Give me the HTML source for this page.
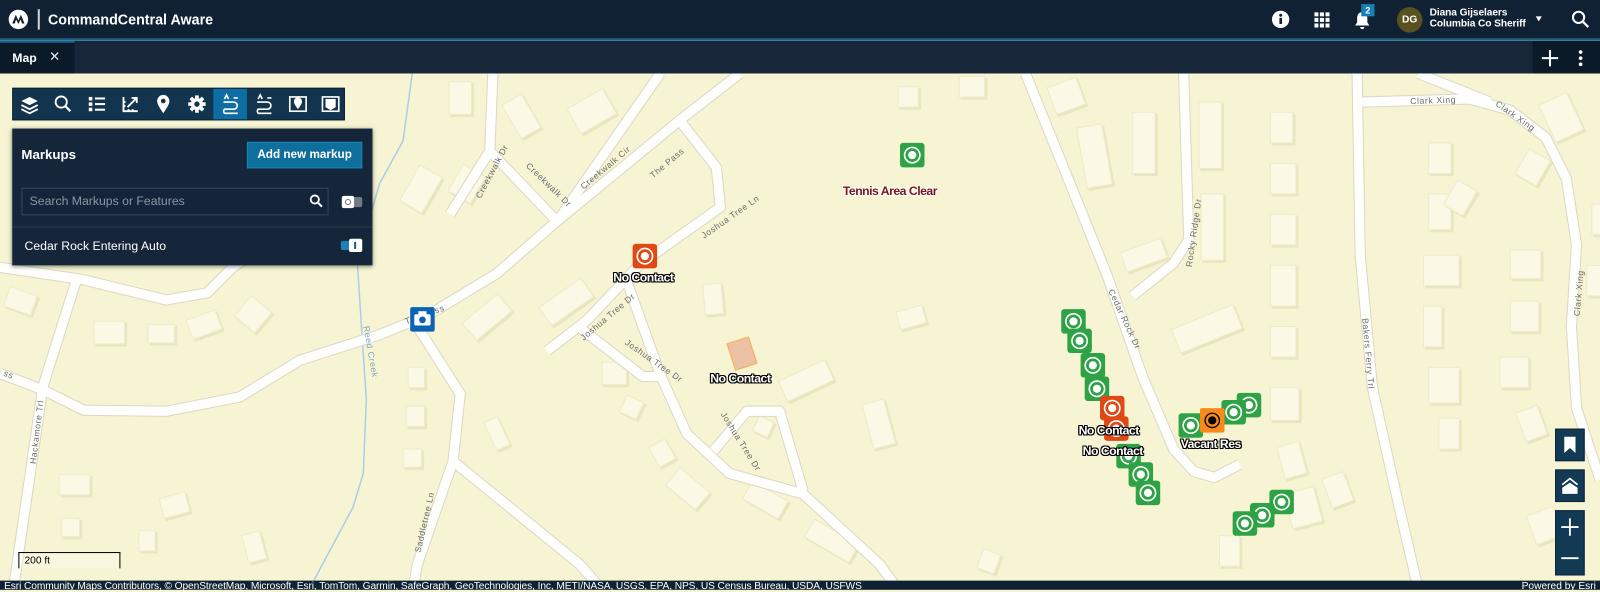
<!DOCTYPE html>
<html><head><meta charset="utf-8"><style>
*{margin:0;padding:0;box-sizing:border-box}
body{width:1600px;height:590px;overflow:hidden;background:#f7f4d3;font-family:"Liberation Sans",sans-serif}
#w{position:absolute;left:0;top:0;width:1568px;height:578px;transform:scale(1.020408);transform-origin:0 0}
.hdr{position:absolute;left:0;top:0;width:1568px;height:38px;background:#0f2133}
.bl{position:absolute;left:0;top:38px;width:1568px;height:2px;background:#17628a}
.tabs{position:absolute;left:0;top:40px;width:1568px;height:32px;background:#18263a}
.abs{position:absolute}
.wt{color:#fff}
.tb{position:absolute;left:12px;top:86px;width:326px;height:32px;background:#12344f;border:1px solid #0a1e2e}
.tb div{position:absolute;top:0;width:33px;height:30px}
.panel{position:absolute;left:12px;top:126px;width:353px;height:134px;background:#15263a;box-shadow:0 1px 4px rgba(0,0,0,.5)}
.lab{position:absolute;font-weight:bold;font-size:12px;color:#fff;letter-spacing:-0.5px;text-shadow:-1px -1px 0 #000,1px -1px 0 #000,-1px 1px 0 #000,1px 1px 0 #000,0 1px 0 #000,0 -1px 0 #000,1px 0 0 #000,-1px 0 0 #000;white-space:nowrap}
.ctl{position:absolute;left:1524px;width:29px;background:#123a55;border:1px solid #0a2436}
</style></head><body><div id="w">
<svg class="abs" style="left:0;top:0" width="1568" height="578" viewBox="0 0 1568 578">
<defs>
<g id="roads" fill="none" stroke-linejoin="round" stroke-linecap="butt">
<path d="M0,366 L42,382 82,402 163,403 235,389 294,353 372,328 421,308 487,268 542,220 666,118 725,72"/>
<path d="M0,262 L81,274 163,294 203,287 228,262 260,240"/>
<path d="M75,274 L42,379 13,578"/>
<path d="M546,217 L647,72"/>
<path d="M483,72 L480,148 441,210"/>
<path d="M480,148 L546,217"/>
<path d="M666,118 L702,164 706,203 627,259 575,314 536,344"/>
<path d="M568,321 L630,369 647,369"/>
<path d="M614,275 L647,367 673,425 715,464 787,484 862,553 880,578"/>
<path d="M699,442 L732,403 764,403 787,481"/>
<path d="M409,320 L451,386 444,452 409,553 405,578"/>
<path d="M444,452 L568,553 590,578"/>
<path d="M1005,72 L1085,270 1120,370 1150,440 1170,462 1190,468 1215,455"/>
<path d="M1160,72 L1165,235 1150,258 1110,290"/>
<path d="M1330,72 L1333,250 1345,380 1365,470 1390,578"/>
<path d="M1335,100 L1440,97 1480,108 1515,135 1535,175 1545,240 1540,320 1545,400 1568,470"/>
<path d="M1390,72 L1460,100"/>
</g>
<g id="mk"><rect x="-12" y="-12" width="24" height="24" rx="3"/><circle r="7.5" fill="none" stroke="#fff" stroke-width="1.6"/><circle r="4" fill="#fff"/></g>
</defs>
<rect width="1568" height="578" fill="#f7f4d3"/>
<path d="M404,72 L395,138 372,180 350,255 359,392 356,464 346,497 307,570" fill="none" stroke="#a9cfe8" stroke-width="1.5"/>
<g fill="#fbf9e5" stroke="#efebc8" stroke-width="1" style="filter:drop-shadow(2px 2px 0 #e9e5bf)">
<rect x="6" y="285" width="28" height="20" transform="rotate(20 20 295)"/>
<rect x="92" y="315" width="30" height="22"/><rect x="145" y="318" width="26" height="18"/>
<rect x="185" y="308" width="30" height="20" transform="rotate(-20 200 318)"/>
<rect x="235" y="295" width="26" height="26" transform="rotate(40 248 308)"/>
<rect x="58" y="465" width="30" height="20"/><rect x="158" y="485" width="26" height="20" transform="rotate(-15 171 495)"/>
<rect x="60" y="508" width="18" height="18"/><rect x="136" y="520" width="16" height="20"/>
<rect x="240" y="522" width="18" height="28" transform="rotate(-15 249 536)"/>
<rect x="400" y="360" width="16" height="20"/><rect x="398" y="398" width="18" height="20"/>
<rect x="395" y="440" width="18" height="18"/><rect x="480" y="410" width="14" height="30" transform="rotate(-25 487 425)"/>
<rect x="455" y="300" width="45" height="22" transform="rotate(-40 477 311)"/>
<rect x="445" y="165" width="25" height="30" transform="rotate(30 457 180)"/>
<rect x="400" y="165" width="25" height="40" transform="rotate(30 412 185)"/>
<rect x="440" y="80" width="22" height="32"/><rect x="500" y="95" width="22" height="38" transform="rotate(-30 511 114)"/>
<rect x="560" y="95" width="40" height="28" transform="rotate(-30 580 109)"/>
<rect x="530" y="285" width="50" height="22" transform="rotate(-35 555 296)"/>
<rect x="590" y="355" width="24" height="22"/><rect x="610" y="390" width="18" height="18" transform="rotate(25 619 399)"/>
<rect x="690" y="278" width="18" height="30" transform="rotate(-5 699 293)"/>
<rect x="765" y="362" width="50" height="22" transform="rotate(-25 790 373)"/>
<rect x="850" y="393" width="22" height="45" transform="rotate(-15 861 415)"/>
<rect x="740" y="410" width="16" height="16" transform="rotate(25 748 418)"/>
<rect x="640" y="433" width="18" height="22" transform="rotate(-30 649 444)"/>
<rect x="655" y="468" width="38" height="22" transform="rotate(40 674 479)"/>
<rect x="730" y="480" width="40" height="20" transform="rotate(30 750 490)"/>
<rect x="790" y="520" width="50" height="20" transform="rotate(30 815 530)"/>
<rect x="880" y="302" width="26" height="18" transform="rotate(-15 893 311)"/>
<rect x="1060" y="123" width="25" height="60" transform="rotate(-10 1072 153)"/>
<rect x="1110" y="110" width="22" height="60"/><rect x="1175" y="100" width="22" height="65"/>
<rect x="1177" y="190" width="22" height="65"/><rect x="1100" y="240" width="42" height="20" transform="rotate(-20 1121 250)"/>
<rect x="1150" y="310" width="65" height="25" transform="rotate(-22 1182 322)"/>
<rect x="1245" y="110" width="22" height="30"/><rect x="1245" y="160" width="25" height="30"/>
<rect x="1245" y="210" width="25" height="30"/><rect x="1245" y="260" width="25" height="40"/>
<rect x="1245" y="320" width="25" height="30"/><rect x="1245" y="380" width="28" height="32"/>
<rect x="1255" y="435" width="22" height="32" transform="rotate(-15 1266 451)"/>
<rect x="1262" y="480" width="30" height="35" transform="rotate(-15 1277 497)"/>
<rect x="1400" y="140" width="22" height="30"/><rect x="1400" y="190" width="22" height="35"/>
<rect x="1395" y="250" width="35" height="30"/><rect x="1395" y="300" width="18" height="40"/>
<rect x="1400" y="360" width="30" height="35"/><rect x="1410" y="410" width="20" height="30"/>
<rect x="1420" y="180" width="22" height="28" transform="rotate(30 1431 194)"/>
<rect x="1490" y="150" width="24" height="28" transform="rotate(30 1502 164)"/>
<rect x="1480" y="245" width="30" height="28"/><rect x="1480" y="295" width="28" height="30"/>
<rect x="1470" y="350" width="28" height="30"/><rect x="1490" y="400" width="22" height="30" transform="rotate(-20 1501 415)"/>
<rect x="1515" y="95" width="30" height="40" transform="rotate(-25 1530 115)"/>
<rect x="1560" y="200" width="25" height="30"/><rect x="1555" y="260" width="25" height="30"/>
<rect x="1300" y="465" width="22" height="30" transform="rotate(-20 1311 480)"/>
<rect x="1500" y="500" width="28" height="30" transform="rotate(-20 1514 515)"/>
<rect x="880" y="85" width="20" height="20"/><rect x="940" y="75" width="25" height="20"/>
<rect x="1030" y="80" width="30" height="28" transform="rotate(-20 1045 94)"/>
<rect x="960" y="540" width="18" height="20" transform="rotate(20 969 550)"/>
<rect x="1195" y="525" width="20" height="30"/>
</g>
<use href="#roads" stroke="#dcd8c4" stroke-width="11"/>
<use href="#roads" stroke="#fefefd" stroke-width="9"/>
<g font-family="Liberation Sans,sans-serif" font-size="8.5" fill="#6b6b6b" letter-spacing="0.6">
<text transform="translate(471,195) rotate(-62)">Creekwalk Dr</text>
<text transform="translate(515,163) rotate(44)">Creekwalk Dr</text>
<text transform="translate(572,186) rotate(-40)">Creekwalk Cir</text>
<text transform="translate(640,175) rotate(-40)">The Pass</text>
<text transform="translate(690,234) rotate(-35)">Joshua Tree Ln</text>
<text transform="translate(572,334) rotate(-40)">Joshua Tree Dr</text>
<text transform="translate(612,337) rotate(35)">Joshua Tree Dr</text>
<text transform="translate(706,406) rotate(58)">Joshua Tree Dr</text>
<text transform="translate(412,542) rotate(-77)">Saddletree Ln</text>
<text transform="translate(35,455) rotate(-83)">Hackamore Trl</text>
<text transform="translate(356,320) rotate(80)" fill="#7ba4c8">Reed Creek</text>
<text transform="translate(1086,285) rotate(65)">Cedar Rock Dr</text>
<text transform="translate(1168,262) rotate(-82)">Rocky Ridge Dr</text>
<text transform="translate(1335,312) rotate(85)">Bakers Ferry Trl</text>
<text transform="translate(1382,102) rotate(-2)">Clark Xing</text>
<text transform="translate(1465,103) rotate(35)">Clark Xing</text>
<text transform="translate(1548,310) rotate(-85)">Clark Xing</text>
<text transform="translate(3,368) rotate(20)">ss</text>
<text transform="translate(398,318) rotate(-20)">The Pass</text>
</g>
<rect x="716" y="333" width="22" height="27" transform="rotate(-18 727 346)" fill="#ecc1a5" stroke="#f4b45a" stroke-width="1.2"/>
<g fill="#2ea345">
<use href="#mk" x="894" y="152"/>
<use href="#mk" x="1052" y="315"/><use href="#mk" x="1058" y="334"/>
<use href="#mk" x="1071" y="358"/><use href="#mk" x="1075" y="381"/>
<use href="#mk" x="1106" y="447"/><use href="#mk" x="1118" y="465"/><use href="#mk" x="1125" y="483"/>
<use href="#mk" x="1224" y="397"/><use href="#mk" x="1209" y="404"/><use href="#mk" x="1167" y="417"/>
<use href="#mk" x="1256" y="492"/><use href="#mk" x="1237" y="505"/><use href="#mk" x="1220" y="513"/>
</g>
<g fill="#e04814"><use href="#mk" x="632" y="251"/><use href="#mk" x="1090" y="400"/><use href="#mk" x="1094" y="420"/></g>
<g transform="translate(1188,412)"><rect x="-12" y="-12" width="24" height="24" rx="2" fill="#f98a1a"/><circle r="7" fill="none" stroke="#000" stroke-width="1.3"/><circle r="4" fill="#000"/></g>
<g transform="translate(414,313)"><rect x="-12" y="-12" width="24" height="24" rx="2" fill="#0a63b4"/><rect x="-8" y="-5" width="16" height="11" rx="1.5" fill="#fff"/><rect x="-4" y="-8" width="8" height="4" fill="#fff"/><circle cy="0.5" r="3.3" fill="#0a63b4"/></g>
</svg>
<div class="lab" style="left:826px;top:180px;color:#7a1419;text-shadow:-1px -1px 0 #fff,1px -1px 0 #fff,-1px 1px 0 #fff,1px 1px 0 #fff,0 1px 0 #fff,0 -1px 0 #fff,1px 0 0 #fff,-1px 0 0 #fff">Tennis Area Clear</div>
<div class="lab" style="left:601px;top:265px">No Contact</div>
<div class="lab" style="left:696px;top:364px">No Contact</div>
<div class="lab" style="left:1057px;top:415px">No Contact</div>
<div class="lab" style="left:1061px;top:435px">No Contact</div>
<div class="lab" style="left:1157px;top:428px">Vacant Res</div>
<div class="abs" style="left:18px;top:541px;width:100px;height:16px;border:1.5px solid #000;border-bottom:none;font-size:10px;color:#000;padding:2px 5px;background:rgba(255,255,255,.25)">200 ft</div>

<div class="ctl" style="top:420px;height:32px"><svg width="27" height="30"><path d="M8,7 H19 V23 L13.5,18 L8,23Z" fill="#fff"/></svg></div>
<div class="ctl" style="top:460px;height:32px"><svg width="27" height="30"><path d="M6,14 L13.5,8 L21,14" fill="none" stroke="#fff" stroke-width="1.6"/><path d="M6,17 L13.5,12 L21,17 V23 H6Z" fill="#fff"/></svg></div>
<div class="ctl" style="top:500px;height:64px"><svg width="27" height="62"><path d="M13.5,7 V24 M5,15.5 H22" stroke="#fff" stroke-width="1.8"/><path d="M5,46 H22" stroke="#fff" stroke-width="1.8"/></svg></div>

<div class="abs" style="left:0;top:569px;width:1568px;height:9px;background:#0f2133;overflow:hidden"></div>
<div class="abs" style="left:4px;top:569px;font-size:10px;color:#fff;white-space:nowrap;line-height:11px;letter-spacing:-0.1px">Esri Community Maps Contributors, © OpenStreetMap, Microsoft, Esri, TomTom, Garmin, SafeGraph, GeoTechnologies, Inc, METI/NASA, USGS, EPA, NPS, US Census Bureau, USDA, USFWS</div>
<div class="abs" style="right:4px;top:569px;font-size:10px;color:#fff;line-height:11px">Powered by Esri</div>

<div class="hdr"></div>
<svg class="abs" style="left:8px;top:9px" width="20" height="20"><circle cx="10" cy="10" r="9.5" fill="#fff"/><path d="M4,14 L7.5,5.5 L10,11 L12.5,5.5 L16,14 L13.5,14 L12.3,10 L10,14.5 L7.7,10 L6.5,14Z" fill="#0f2133"/></svg>
<div class="abs" style="left:37px;top:9px;width:1.5px;height:20px;background:#cfd5da"></div>
<div class="abs wt" style="left:47px;top:11px;font-size:14px;font-weight:bold">CommandCentral Aware</div>
<svg class="abs" style="left:1246px;top:10px" width="18" height="18"><circle cx="9" cy="9" r="8.5" fill="#fff"/><rect x="7.8" y="7.5" width="2.6" height="6" fill="#0f2133"/><circle cx="9.1" cy="5" r="1.5" fill="#0f2133"/></svg>
<svg class="abs" style="left:1288px;top:12px" width="15" height="15" fill="#fff"><rect x="0" y="0" width="4" height="4"/><rect x="5.5" y="0" width="4" height="4"/><rect x="11" y="0" width="4" height="4"/><rect x="0" y="5.5" width="4" height="4"/><rect x="5.5" y="5.5" width="4" height="4"/><rect x="11" y="5.5" width="4" height="4"/><rect x="0" y="11" width="4" height="4"/><rect x="5.5" y="11" width="4" height="4"/><rect x="11" y="11" width="4" height="4"/></svg>
<svg class="abs" style="left:1326px;top:10px" width="18" height="20"><path d="M9,2 C5,2 4,5 4,8 V12 L2,15 H16 L14,12 V8 C14,5 13,2 9,2Z M7,16.5 H11 A2,2 0 0 1 7,16.5Z" fill="#fff"/></svg>
<div class="abs wt" style="left:1334px;top:4px;width:13px;height:12px;background:#1a7fb8;font-size:9px;font-weight:bold;text-align:center;line-height:12px">2</div>
<div class="abs wt" style="left:1369px;top:7px;width:25px;height:25px;border-radius:50%;background:#5a5120;font-size:10px;font-weight:bold;text-align:center;line-height:25px">DG</div>
<div class="abs wt" style="left:1401px;top:7px;font-size:10px;font-weight:bold;line-height:11px;letter-spacing:-0.1px">Diana Gijselaers<br>Columbia Co Sheriff</div>
<div class="abs" style="left:1505px;top:16px;border-left:3.5px solid transparent;border-right:3.5px solid transparent;border-top:5px solid #fff"></div>
<svg class="abs" style="left:1540px;top:10px" width="18" height="18"><circle cx="7" cy="7" r="5.5" fill="none" stroke="#fff" stroke-width="2"/><path d="M11,11 L16.5,16.5" stroke="#fff" stroke-width="2.2"/></svg>
<div class="bl"></div>
<div class="tabs"></div>
<div class="abs" style="left:0;top:40px;width:73px;height:32px;background:#0b1a29;border-top:2px solid #17628a"></div>
<div class="abs wt" style="left:12px;top:50px;font-size:12px;font-weight:bold">Map</div>
<div class="abs" style="left:48px;top:48px;font-size:13px;color:#dfe5ea">✕</div>
<div class="abs" style="left:1502px;top:40px;width:66px;height:32px;background:#0b1a29"></div>
<svg class="abs" style="left:1510px;top:48px" width="18" height="18"><path d="M9,1 V17 M1,9 H17" stroke="#fff" stroke-width="2"/></svg>
<svg class="abs" style="left:1546px;top:48px" width="6" height="18" fill="#fff"><circle cx="3" cy="3" r="1.8"/><circle cx="3" cy="9" r="1.8"/><circle cx="3" cy="15" r="1.8"/></svg>

<div class="tb">
<div style="left:196px;background:#0e6ea4"></div>
<svg class="abs" style="left:0;top:0" width="326" height="30" fill="none" stroke="#fff" stroke-width="1.8">
<g transform="translate(16,15)"><path d="M-8,-3 L0,-7 L8,-3 L0,1Z" fill="#fff" stroke="none"/><path d="M-8,1 L0,5 L8,1 M-8,5 L0,9 L8,5"/></g>
<g transform="translate(49,15)"><circle cx="-2" cy="-2" r="5.5"/><path d="M2,2 L7,7" stroke-width="2.2"/></g>
<g transform="translate(82,15)" fill="#fff" stroke="none"><rect x="-8" y="-7" width="3.5" height="3.5"/><rect x="-8" y="-1.7" width="3.5" height="3.5"/><rect x="-8" y="3.5" width="3.5" height="3.5"/><rect x="-2" y="-6.5" width="10" height="2"/><rect x="-2" y="-1" width="10" height="2"/><rect x="-2" y="4.5" width="10" height="2"/></g>
<g transform="translate(115,15)"><path d="M-7,-7 V7 H7"/><path d="M-3,3 L6,-6 M1,-6 H6 V-1"/><path d="M-7,-2 H-5 M-7,2 H-5 M-2,7 V5 M2,7 V5"/></g>
<g transform="translate(147,15)"><path d="M0,9 C-4,3 -6,0 -6,-3 A6,6 0 0 1 6,-3 C6,0 4,3 0,9Z" fill="#fff" stroke="none"/><circle cy="-3" r="2.3" fill="#12344f" stroke="none"/></g>
<g transform="translate(180,15)" fill="#fff" stroke="none"><circle r="6"/><rect x="-1.8" y="-8.5" width="3.6" height="17"/><rect x="-1.8" y="-8.5" width="3.6" height="17" transform="rotate(45)"/><rect x="-1.8" y="-8.5" width="3.6" height="17" transform="rotate(90)"/><rect x="-1.8" y="-8.5" width="3.6" height="17" transform="rotate(135)"/><circle r="2.6" fill="#12344f"/></g>
<g transform="translate(213,15)" stroke-width="1.6"><path d="M-7,-2 H3 A3.5,3.5 0 0 1 3,5 H-6 A3,3 0 0 0 -6,9 H7"/><path d="M-6,-5 L-4,-9 L-2,-5 M3,-6 H7"/></g>
<g transform="translate(246,15)" stroke-width="1.6"><path d="M-7,-2 H3 A3.5,3.5 0 0 1 3,5 H-6 A3,3 0 0 0 -6,9 H7"/><path d="M-6,-5 L-4,-9 L-2,-5 M3,-6 H7"/></g>
<g transform="translate(279,15)"><rect x="-8" y="-7" width="16" height="14" stroke-width="1.6"/><path d="M0,5 C-3,1 -4,-1 -4,-2.5 A4,4 0 0 1 4,-2.5 C4,-1 3,1 0,5Z" fill="#fff" stroke="none"/></g>
<g transform="translate(311,15)"><rect x="-8" y="-7" width="16" height="14" stroke-width="1.6"/><path d="M-5,-5 H5 V3 L0,6 L-5,3Z" fill="#fff" stroke="none"/></g>
</svg>
</div>

<div class="panel">
<div class="abs wt" style="left:9px;top:18px;font-size:13px;font-weight:bold">Markups</div>
<div class="abs wt" style="left:230px;top:13px;width:113px;height:26px;background:#0e6e9c;border:1px solid #1a86b8;font-size:11.5px;font-weight:bold;text-align:center;line-height:24px">Add new markup</div>
<div class="abs" style="left:9px;top:58px;width:301px;height:27px;border:1px solid #33475a;background:#14243a;color:#8b96a2;font-size:12px;line-height:25px;padding-left:7px">Search Markups or Features</div>
<svg class="abs" style="left:291px;top:64px" width="14" height="14"><circle cx="5.5" cy="5.5" r="4" fill="none" stroke="#fff" stroke-width="1.8"/><path d="M8.5,8.5 L12.5,12.5" stroke="#fff" stroke-width="2"/></svg>
<div class="abs" style="left:323px;top:67px;width:20px;height:10px;background:#6f7c86;border-radius:2px"></div>
<div class="abs" style="left:323px;top:66px;width:12px;height:12px;background:#fff;border-radius:2px"><div style="margin:3px;width:6px;height:6px;border:1px solid #777;border-radius:50%"></div></div>
<div class="abs" style="left:0;top:96px;width:353px;height:1px;background:#2b3c4f"></div>
<div class="abs" style="left:12px;top:108px;font-size:12px;color:#fff">Cedar Rock Entering Auto</div>
<div class="abs" style="left:322px;top:110px;width:20px;height:9px;background:#1a82b6;border-radius:2px"></div>
<div class="abs" style="left:330px;top:108px;width:13px;height:13px;background:#fff;border-radius:2px"><div style="margin:3px 5px;width:2px;height:7px;background:#1a5f8a"></div></div>
</div>
</div></body></html>
